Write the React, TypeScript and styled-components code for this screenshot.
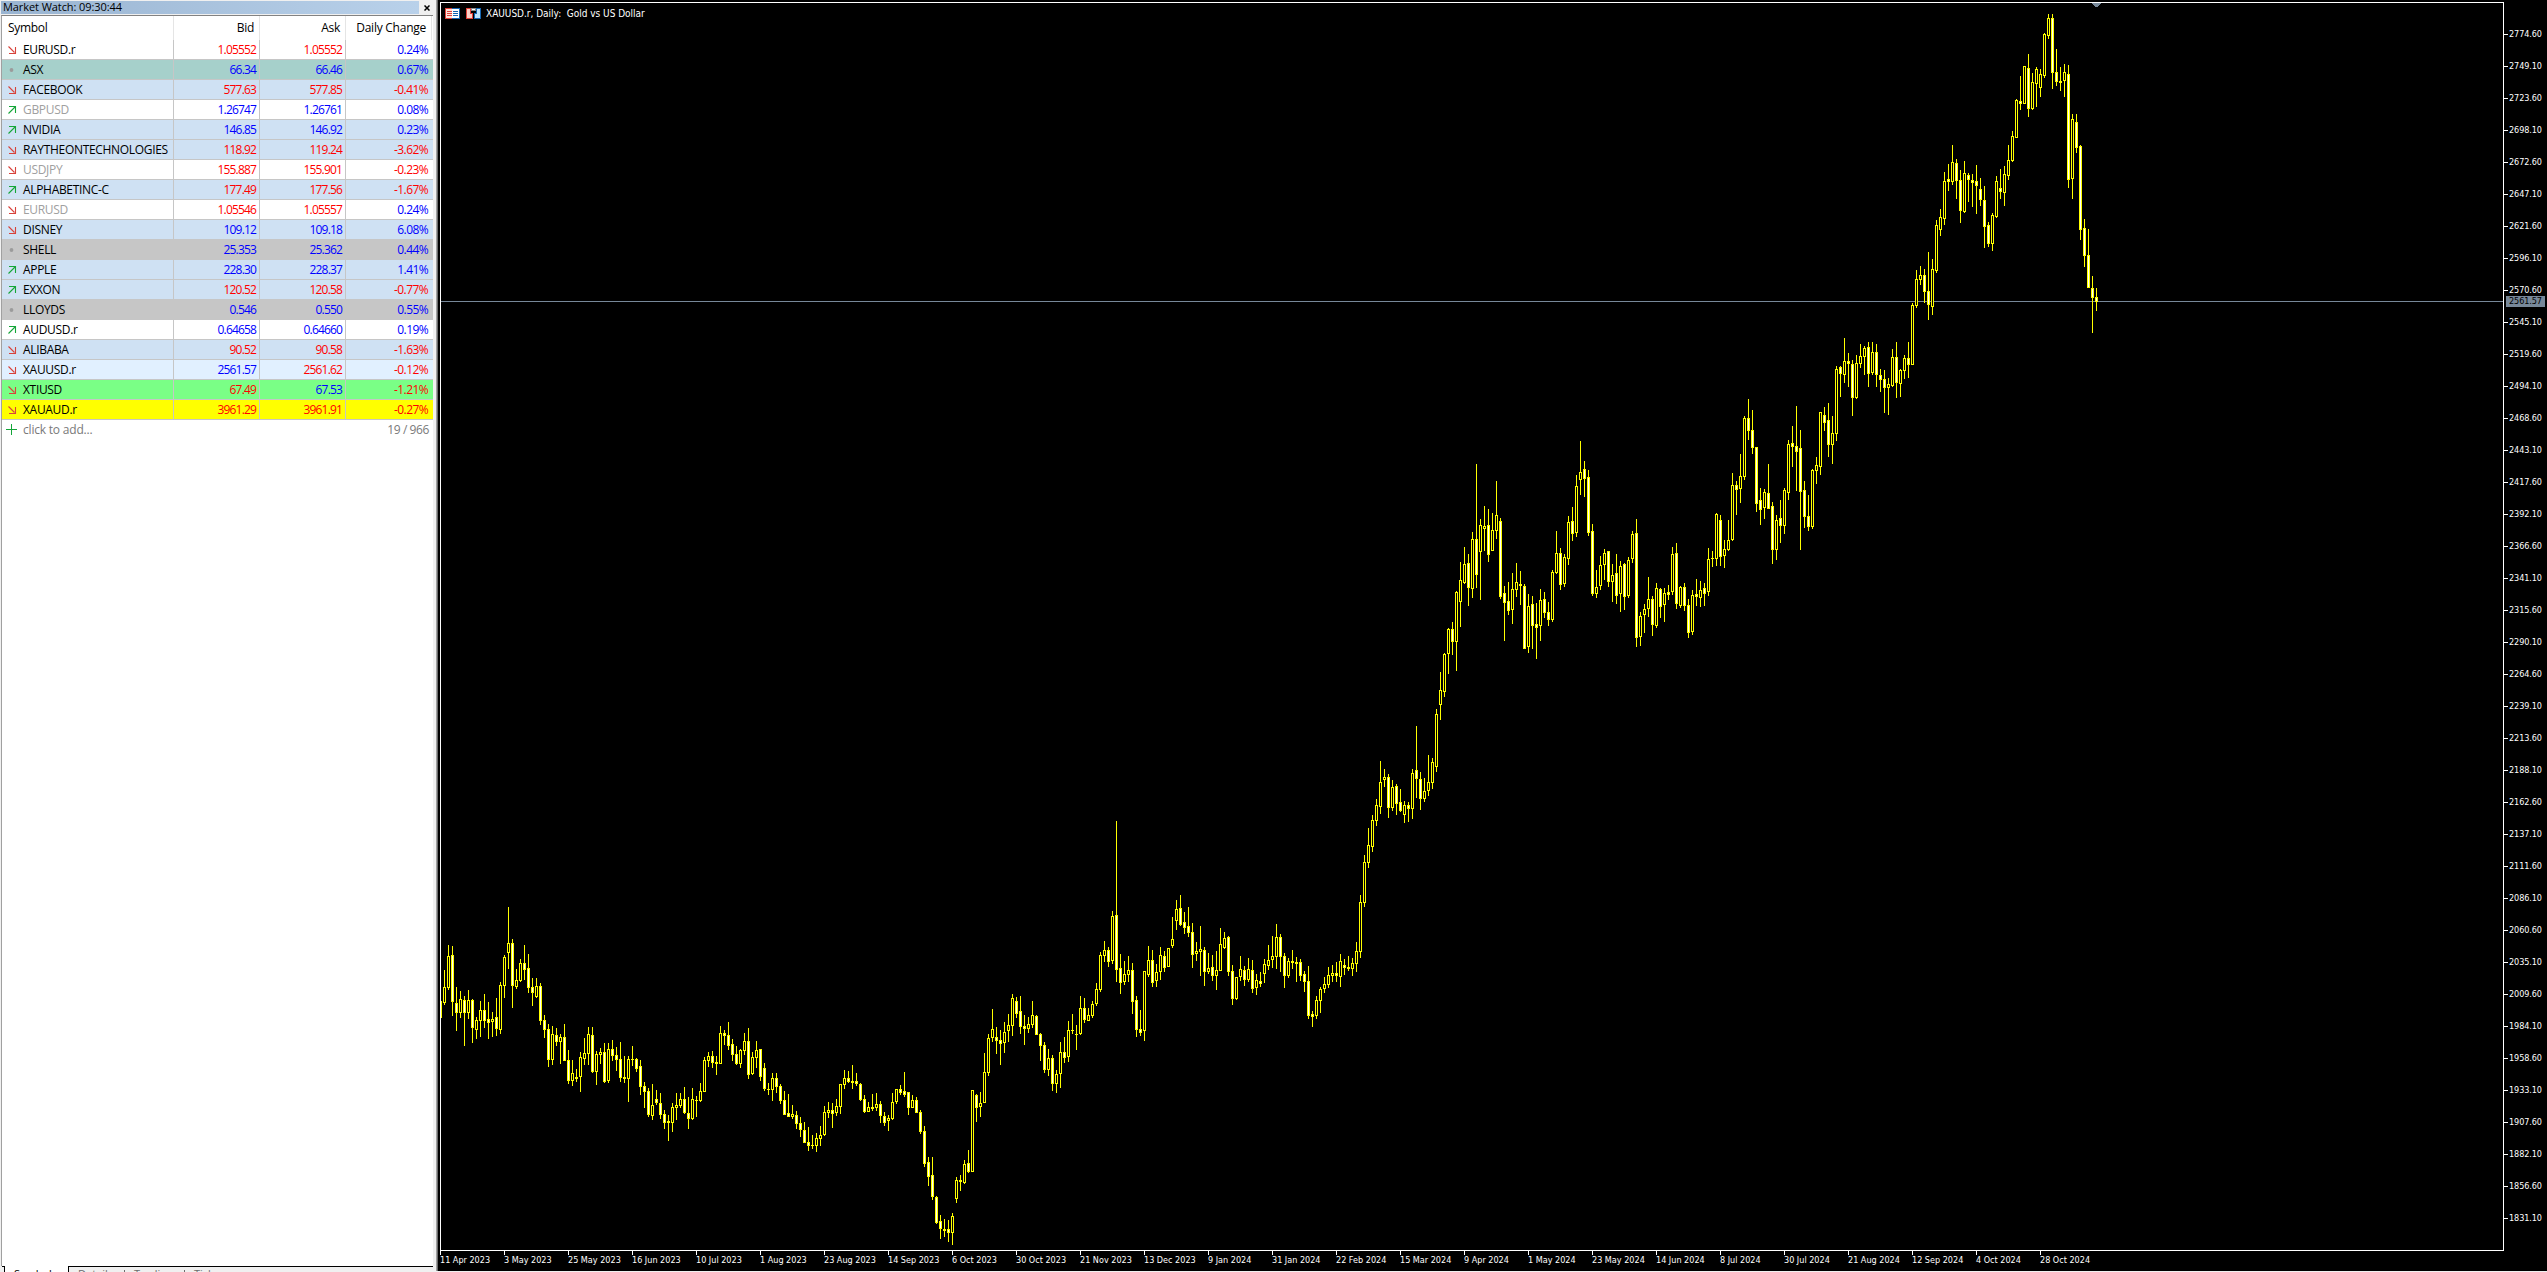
import React from "react";
import styled, { createGlobalStyle } from "styled-components";

const UI_FONT = `"Open Sans", "Noto Sans", sans-serif`;
const CHART_FONT = `"DejaVu Sans Condensed", "DejaVu Sans", sans-serif`;

const GlobalStyle = createGlobalStyle`
  * {
    box-sizing: border-box;
  }
  html, body {
    margin: 0;
    padding: 0;
    overflow: hidden;
  }
`;

const Layout = styled.div`
  display: flex;
  width: 2547px;
  height: 1272px;
  background: #f0f0f0;
  overflow: hidden;
`;

/* ---------- market watch ---------- */

const Panel = styled.div`
  display: flex;
  flex-direction: column;
  width: 436px;
  height: 1272px;
  padding-top: 1px;
  background: #f0f0f0;
  font-family: ${UI_FONT};
  color: #000;
`;

const PanelTop = styled.div`
  display: flex;
  align-items: center;
  height: 13px;
  margin: 0 0 1px 1px;
`;

const PanelTitle = styled.div`
  width: 418px;
  height: 13px;
  padding-left: 2px;
  background: linear-gradient(90deg, #99b4d1, #b9d1ea);
  font-size: 11px;
  line-height: 12px;
  letter-spacing: -0.08px;
  white-space: pre;
`;

const CloseButton = styled.div`
  display: flex;
  align-items: center;
  justify-content: center;
  width: 16px;
  height: 13px;
`;

const Table = styled.div`
  flex: 1;
  width: 432px;
  margin-left: 1px;
  border-left: 1px solid #a0a0a0;
  border-top: 1px solid #828282;
  background: #fff;
  font-size: 12px;
`;

const Row = styled.div<{ $bg?: string }>`
  display: grid;
  grid-template-columns: 172px 86px 86px 86px;
  height: 20px;
  background: ${props => props.$bg || "#fff"};
  border-bottom: 1px solid #c6c6c6;
`;

const HeaderRow = styled(Row)`
  height: 24px;
  border-bottom: none;
`;

const Cell = styled.div<{ $color?: string }>`
  display: flex;
  align-items: center;
  justify-content: flex-end;
  padding-right: 3px;
  border-right: 1px solid #c6c6c6;
  color: ${props => props.$color || "#000"};
  letter-spacing: -0.84px;
  line-height: 18px;
  white-space: nowrap;
  &:last-child {
    padding-right: 4px;
    border-right: none;
    letter-spacing: -0.6px;
  }
`;

const HeaderCell = styled(Cell)`
  padding: 0 5px 0 6px;
  border-right-color: #e5e5e5;
  letter-spacing: -0.3px;
  &:first-child {
    justify-content: flex-start;
  }
  &:last-child {
    padding-right: 5px;
    border-right: 1px solid #e5e5e5;
    letter-spacing: -0.25px;
  }
`;

const SymbolCell = styled(Cell)`
  justify-content: flex-start;
  gap: 6px;
  padding-left: 5px;
  letter-spacing: -0.32px;
`;

const AddRow = styled.div`
  display: flex;
  align-items: center;
  height: 19px;
  padding: 0 4px 0 4px;
  color: #7a7a7a;
  letter-spacing: -0.2px;
`;

const AddLabel = styled.span`
  flex: 1;
  padding-left: 6px;
`;

const Count = styled.span`
  letter-spacing: -0.4px;
`;

const Tabs = styled.div`
  display: flex;
  height: 6px;
  width: 431px;
  margin-left: 2px;
  overflow: hidden;
  font-size: 11px;
  line-height: 14px;
`;

const Tab = styled.div<{ $active?: boolean; $width: number }>`
  width: ${props => props.$width}px;
  height: 20px;
  padding-left: 9px;
  border-top: 1px solid ${props => (props.$active ? "#fff" : "#000")};
  background: ${props => (props.$active ? "#fff" : "#f0f0f0")};
  color: ${props => (props.$active ? "#000" : "#6d6d6d")};
`;

const TabDivider = styled.div`
  width: 1px;
  height: 20px;
  border-top: 1px solid #000;
  background: linear-gradient(#f0f0f0 3px, #6d6d6d 3px);
`;

const TabEdge = styled.div<{ $width: number; $side: "left" | "right" }>`
  width: ${props => props.$width}px;
  height: 20px;
  border-top: 1px solid #000;
  border-${props => props.$side}: 1px solid #000;
`;

const RED = "#ff0000";
const BLUE = "#0000ff";
const SKY = "#cfe1f3";

type Trend = "up" | "down" | "flat";

interface Quote {
  symbol: string;
  trend: Trend;
  bid: string;
  ask: string;
  change: string;
  // r = red, b = blue, for bid / ask / change
  colors: string;
  bg?: string;
  muted?: boolean;
}

const quotes: Quote[] = [
  { symbol: "EURUSD.r", trend: "down", bid: "1.05552", ask: "1.05552", change: "0.24%", colors: "rrb" },
  { symbol: "ASX", trend: "flat", bid: "66.34", ask: "66.46", change: "0.67%", colors: "bbb", bg: "#a6d0cb" },
  { symbol: "FACEBOOK", trend: "down", bid: "577.63", ask: "577.85", change: "-0.41%", colors: "rrr", bg: SKY },
  { symbol: "GBPUSD", trend: "up", bid: "1.26747", ask: "1.26761", change: "0.08%", colors: "bbb", muted: true },
  { symbol: "NVIDIA", trend: "up", bid: "146.85", ask: "146.92", change: "0.23%", colors: "bbb", bg: SKY },
  { symbol: "RAYTHEONTECHNOLOGIES", trend: "down", bid: "118.92", ask: "119.24", change: "-3.62%", colors: "rrr", bg: SKY },
  { symbol: "USDJPY", trend: "down", bid: "155.887", ask: "155.901", change: "-0.23%", colors: "rrr", muted: true },
  { symbol: "ALPHABETINC-C", trend: "up", bid: "177.49", ask: "177.56", change: "-1.67%", colors: "rrr", bg: SKY },
  { symbol: "EURUSD", trend: "down", bid: "1.05546", ask: "1.05557", change: "0.24%", colors: "rrb", muted: true },
  { symbol: "DISNEY", trend: "down", bid: "109.12", ask: "109.18", change: "6.08%", colors: "bbb", bg: SKY },
  { symbol: "SHELL", trend: "flat", bid: "25.353", ask: "25.362", change: "0.44%", colors: "bbb", bg: "#c6c6c6" },
  { symbol: "APPLE", trend: "up", bid: "228.30", ask: "228.37", change: "1.41%", colors: "bbb", bg: SKY },
  { symbol: "EXXON", trend: "up", bid: "120.52", ask: "120.58", change: "-0.77%", colors: "rrr", bg: SKY },
  { symbol: "LLOYDS", trend: "flat", bid: "0.546", ask: "0.550", change: "0.55%", colors: "bbb", bg: "#c6c6c6" },
  { symbol: "AUDUSD.r", trend: "up", bid: "0.64658", ask: "0.64660", change: "0.19%", colors: "bbb" },
  { symbol: "ALIBABA", trend: "down", bid: "90.52", ask: "90.58", change: "-1.63%", colors: "rrr", bg: SKY },
  { symbol: "XAUUSD.r", trend: "down", bid: "2561.57", ask: "2561.62", change: "-0.12%", colors: "brr", bg: "#e1f0ff" },
  { symbol: "XTIUSD", trend: "down", bid: "67.49", ask: "67.53", change: "-1.21%", colors: "rbr", bg: "#7aff86" },
  { symbol: "XAUAUD.r", trend: "down", bid: "3961.29", ask: "3961.91", change: "-0.27%", colors: "rrr", bg: "#ffff00" },
];

const toColor = (c: string) => (c === "r" ? RED : BLUE);

const TrendIcon: React.FC<{ trend: Trend }> = ({ trend }) => (
  <svg width="10" height="10" viewBox="0 0 10 10" fill="none">
    {trend === "flat" && <circle cx="4.5" cy="5" r="1.9" fill="#9b9b9b" />}
    {trend === "down" && <path d="M1.5 1.5L7.5 7.5M2 8.5H8.5V2" stroke="#d8433b" strokeWidth="1.1" />}
    {trend === "up" && <path d="M1.5 8.5L8 2M2 1.5H8.5V8" stroke="#14a538" strokeWidth="1.1" />}
  </svg>
);

const MarketWatch: React.FC = () => (
  <Panel>
    <PanelTop>
      <PanelTitle>Market Watch: 09:30:44</PanelTitle>
      <CloseButton>
        <svg width="6" height="6" viewBox="0 0 6 6">
          <path d="M0.5 0.5L5.5 5.5M5.5 0.5L0.5 5.5" stroke="#000" strokeWidth="1.5" />
        </svg>
      </CloseButton>
    </PanelTop>
    <Table>
      <HeaderRow>
        <HeaderCell>Symbol</HeaderCell>
        <HeaderCell>Bid</HeaderCell>
        <HeaderCell>Ask</HeaderCell>
        <HeaderCell>Daily Change</HeaderCell>
      </HeaderRow>
      {quotes.map(q => (
        <Row key={q.symbol} $bg={q.bg}>
          <SymbolCell $color={q.muted ? "#a0a0a0" : "#000"}>
            <TrendIcon trend={q.trend} />
            {q.symbol}
          </SymbolCell>
          <Cell $color={toColor(q.colors[0])}>{q.bid}</Cell>
          <Cell $color={toColor(q.colors[1])}>{q.ask}</Cell>
          <Cell $color={toColor(q.colors[2])}>{q.change}</Cell>
        </Row>
      ))}
      <AddRow>
        <svg width="11" height="11" viewBox="0 0 11 11">
          <path d="M5.5 0V11M0 5.5H11" stroke="#14a538" />
        </svg>
        <AddLabel>click to add...</AddLabel>
        <Count>19 / 966</Count>
      </AddRow>
    </Table>
    <Tabs>
      <TabEdge $width={3} $side="right" />
      <Tab $active $width={63}>Symbols</Tab>
      <TabEdge $width={1} $side="left" />
      <Tab $width={55}>Details</Tab>
      <TabDivider />
      <Tab $width={59}>Trading</Tab>
      <TabDivider />
      <Tab $width={248}>Ticks</Tab>
    </Tabs>
  </Panel>
);

/* ---------- chart ---------- */

const ChartWindow = styled.div`
  display: flex;
  flex-direction: column;
  flex: 1;
  height: 1271px;
  padding: 2px 0 0 2px;
  background: #000;
  border-left: 1px solid #a0a0a0;
  box-shadow: inset 1px 0 0 #696969;
  font-family: ${CHART_FONT};
  font-size: 9px;
  color: #fff;
`;

const ChartBody = styled.div`
  display: flex;
  height: 1249px;
  margin-left: 1px;
`;

const Plot = styled.div`
  position: relative;
  width: 2064px;
  height: 1249px;
  border: 1px solid #fff;
`;

const PlotSvg = styled.svg`
  position: absolute;
  left: -1px;
  top: -1px;
`;

const ChartCaption = styled.div`
  position: relative;
  display: flex;
  align-items: center;
  gap: 6px;
  padding: 5px 0 0 4px;
  height: 16px;
  line-height: 12px;
  white-space: pre;
`;

const CaptionText = styled.span`
  margin-left: -1px;
  font-size: 10px;
  letter-spacing: -0.02px;
`;

const PriceScale = styled.div`
  position: relative;
  flex: 1;
  padding-top: 16px;
`;

const PriceLabel = styled.div`
  display: flex;
  align-items: center;
  height: 32px;
  line-height: 32px;
  letter-spacing: -0.08px;
  &::before {
    content: "";
    width: 4px;
    height: 1px;
    margin-right: 1px;
    background: #fff;
  }
`;

const LastPrice = styled.div`
  position: absolute;
  left: 2px;
  top: 294px;
  width: 39px;
  height: 11px;
  padding-left: 3px;
  background: #778899;
  color: #000;
  line-height: 11px;
  letter-spacing: -0.08px;
`;

const TimeScale = styled.div`
  display: flex;
  margin-left: 1px;
`;

const TimeLabel = styled.div`
  width: 64px;
  white-space: nowrap;
  line-height: 11px;
  &::before {
    content: "";
    display: block;
    width: 1px;
    height: 4px;
    background: #fff;
  }
`;

const times = [
  "11 Apr 2023", "3 May 2023", "25 May 2023", "16 Jun 2023", "10 Jul 2023", "1 Aug 2023", "23 Aug 2023",
  "14 Sep 2023", "6 Oct 2023", "30 Oct 2023", "21 Nov 2023", "13 Dec 2023", "9 Jan 2024", "31 Jan 2024",
  "22 Feb 2024", "15 Mar 2024", "9 Apr 2024", "1 May 2024", "23 May 2024", "14 Jun 2024", "8 Jul 2024",
  "30 Jul 2024", "21 Aug 2024", "12 Sep 2024", "4 Oct 2024", "28 Oct 2024",
];

const prices = Array.from({ length: 38 }, (_, i) => (2774.6 - i * 25.5).toFixed(2));

// Each bar: u/d (up or down), then high, body top, body bottom, low,
// as rows below the offset of its series.
const series: { offset: number; bars: string }[] = [
  {
    offset: 880,
    bars: `
u121,121,138,138 u90,107,123,125 u65,76,108,110 d66,75,122,136 d107,123,133,151 u111,119,133,138 d116,120,133,166
u110,120,133,139 d119,120,148,163 u137,140,150,159 u121,130,141,157 d114,130,141,148 d122,139,143,159 u132,139,142,157
d118,137,149,156 u102,105,150,154 u75,77,106,118 u27,63,73,89 d59,63,106,128 u89,100,107,109 u79,83,101,102
d65,83,90,100 d74,88,108,113 d98,107,113,126 u98,106,117,118 d103,106,141,145 d135,140,150,158 d144,149,180,187
u146,154,180,185 d148,155,162,166 u154,157,162,184 d144,157,181,181 d170,180,201,204 u180,193,201,206 d189,197,199,202
u172,177,197,212 u158,173,179,185 u147,154,174,185 d147,155,192,193 u171,174,192,205 u168,172,175,184 d163,172,202,203
u163,169,201,203 d160,169,176,181 d167,175,180,191 d162,179,198,202 d176,197,199,203 u176,179,199,222 d166,179,180,186
d178,179,189,192 d180,186,207,215 d202,206,212,228 d208,211,235,237 u204,225,236,240 d210,219,223,225 d213,223,235,239
d230,234,243,249 d235,241,243,261 u223,227,243,252 u213,225,228,240 u213,219,226,228 d207,219,233,234 d217,233,239,249
u208,219,239,240 d216,220,221,237 u203,211,221,222 u177,180,212,212 u172,176,181,187 d171,176,183,188 d176,182,184,195
u146,153,184,184 d150,153,156,165 d142,155,166,170 d159,164,175,181 d166,174,184,185 u169,170,184,188 u153,161,171,175
d148,161,195,199 u172,177,194,195 u161,170,178,188 d169,169,197,201 d183,188,209,211 d203,209,210,215 u193,198,210,221
d193,198,207,213`,
  },
  {
    offset: 980,
    bars: `
d104,106,121,124 d111,120,135,135 d114,133,137,137 u125,134,137,139 d131,135,144,149 d137,143,150,157 d142,150,163,163
d147,162,166,171 d155,165,166,169 u153,158,166,172 u146,155,159,166 u126,132,155,156 u122,130,133,138 d123,130,134,148
u119,126,133,136 u104,104,127,134 u90,98,105,109 d91,98,102,103 d85,101,103,109 d93,101,104,106 d103,104,120,121
d115,119,132,133 u122,127,132,132 d114,127,129,131 u113,124,128,131 d121,124,136,143 d132,136,143,146 u135,138,141,151
u113,122,139,140 u109,109,122,124 d105,109,113,115 d92,111,115,117 d112,112,128,135 u115,120,128,128 d117,120,133,133
d130,132,152,154 d146,151,184,187 d177,182,197,206 d177,195,217,220 d216,217,243,244 d235,241,249,259 d239,249,251,257
d240,249,253,262 u233,236,253,265 u197,200,219,223 d195,200,202,211 u180,184,203,204 d170,183,192,193 u110,110,192,192
d114,115,128,142 u112,123,127,137 u73,92,123,123 u54,58,93,96 u29,49,58,62 d47,57,61,74 d50,60,64,85 u42,52,63,73
u34,45,51,62 u14,18,46,56 d17,21,34,38 d16,31,47,54 d35,46,49,65 u37,44,49,53 u21,35,45,48 d35,36,55,55
d53,54,66,81 d62,65,90,93 u69,78,90,96 d75,78,104,111 u90,94,104,113 u62,72,94,108 d57,72,78,83 u41,50,77,82
d34,50,51,54 d45,54,55,70 u16,28,54,55 d18,28,40,43 u28,35,41,41 u21,24,36,38`,
  },
  {
    offset: 800,
    bars: `
u183,189,204,206 u152,155,190,192 u141,150,156,162 d147,150,162,167 u111,116,161,164 d21,115,170,182 d154,168,183,194
u161,174,182,185 u156,170,175,182 d163,170,202,214 d196,200,230,237 d210,229,233,236 u171,171,231,241 u146,160,175,177
d150,160,183,187 u164,172,181,187 u147,155,172,180 d151,156,168,172 u148,148,167,167 u117,139,146,148 u100,109,121,130
d95,108,125,126 d112,122,128,134 d107,126,133,137 d123,132,155,168 u142,151,154,161 u126,149,152,176 d147,150,172,186
u153,168,172,174 d155,167,176,181 u151,170,176,190 u128,144,171,171 u132,138,148,149 d136,137,172,176 d165,171,199,205
u177,177,199,200 u156,169,177,181 d166,170,180,186 u158,169,180,182 d160,170,189,193 u174,180,188,195 d172,181,184,187
u159,164,174,183 u145,160,166,170 u136,156,160,168 u124,137,157,169 d134,137,157,172 d153,156,176,188 u158,161,176,178
d150,161,163,169 d157,162,164,182 d159,162,176,181 d171,174,182,192 d166,181,216,219 d211,214,217,227 u196,200,216,219
u187,189,201,213 u177,184,189,193 u167,175,185,188 u165,173,176,182 d162,173,176,182 u154,161,177,187 d159,165,168,175
d156,167,169,171 u158,163,169,176 u142,151,164,172 u95,102,152,158 u55,62,103,107 u28,45,63,68 u15,20,47,52
u-1,5,21,26`,
  },
  {
    offset: 450,
    bars: `
u311,332,357,364 u319,327,330,337 d324,327,358,368 u330,337,358,361 d334,336,354,365 d339,352,361,362 u351,355,365,373
d352,355,359,372 u319,323,359,369 d276,320,329,348 d322,329,349,360 u328,341,349,352 u305,332,341,346 u308,312,333,339
u259,264,317,322 u222,240,255,270 u203,204,242,247 u178,179,204,224 d172,179,192,205 u141,142,192,221 u112,130,152,177
u97,114,133,134 d104,113,138,156 u82,89,139,148 d14,89,125,138 u69,75,102,150 u56,76,79,101 d59,75,105,112
u63,80,101,101 u31,65,81,89 d68,71,147,149 d136,143,153,191 d132,151,161,165 u123,139,160,174 u113,132,140,147
d121,134,136,155 d134,136,199,199 u144,156,197,203 d146,154,176,199 d153,174,178,209 u139,150,176,191 d142,149,163,168
d152,162,170,176 u120,122,170,172 u81,103,123,124 d98,103,135,140 u104,107,134,137 u66,72,109,115 d57,71,84,91
u25,36,83,87 u-9,22,30,45 d11,19,29,47 d20,27,83,86 d74,81,144,146 u120,137,144,148 u106,115,136,140 u99,103,115,130
d101,101,132,137 u114,125,132,152 d104,123,146,154 u111,116,144,162 d113,114,147,160 u107,110,146,148 u81,84,109,113
d69,83,188,197 u162,166,187,196`,
  },
  {
    offset: 330,
    bars: `
u274,279,285,303 u247,269,279,287 d266,269,295,306 u253,258,296,298 d258,259,277,288 u258,263,275,292 d255,262,265,270
u217,224,262,265 d213,223,274,279 u256,257,276,278 d253,257,276,281 d269,275,303,308 u260,265,302,305 d249,264,267,276
u251,260,268,277 d253,258,264,276 u218,229,262,266 d221,228,229,237 u183,184,229,236 d185,190,227,236 u210,219,226,238
u190,210,220,221 u143,155,210,211 d151,155,160,185 u124,146,159,173 u86,88,147,150 d69,88,101,110 d80,100,118,124
d117,117,174,182 d158,170,180,195 u159,162,178,189 d134,163,179,179 d172,176,220,234 u185,190,220,230 d170,188,196,213
u158,160,196,204 u110,114,163,170 d96,113,117,137 d76,116,122,161 d100,118,162,220 d151,160,187,198 d165,186,197,201
u139,140,197,199 u127,135,141,154 u82,82,137,145 d77,85,93,101 d73,90,115,127 u86,103,115,134 u36,39,104,111
d36,37,44,67 u8,31,45,53 d23,31,34,57 d30,34,68,86 u25,33,68,69 u14,26,34,38 u16,18,27,45 d12,17,44,57
u12,22,43,45 d14,22,45,57 d39,45,50,62 d40,49,58,83 u48,54,58,85 u19,27,56,57 d12,27,53,68 u39,40,54,67
u25,28,41,49 d12,28,35,48`,
  },
  {
    offset: 0,
    bars: `
u303,305,365,365 u270,279,306,308 u266,275,280,285 d269,275,292,303 d252,291,305,320 u259,269,307,315 u220,225,271,273
u209,217,230,236 u172,181,219,225 d164,179,182,191 u145,162,182,185 d159,163,181,199 d170,180,211,223 u161,173,212,213
d173,175,180,202 d174,180,183,207 d165,181,186,214 d178,189,200,206 d186,200,227,248 d222,225,244,247 u213,215,244,251
u176,181,217,218 d169,188,192,199 u166,174,193,206 u145,160,176,180 u131,136,161,162 u99,100,138,138 d76,101,104,110
u66,66,104,104 d54,68,109,117 u73,82,109,110 u67,69,84,107 u69,74,88,97 u33,34,76,78 u14,18,36,39 d14,18,73,89
d49,72,82,86 d67,81,83,91 u64,72,81,97 d65,74,180,188 u114,119,179,199 d114,122,148,153 d145,146,230,240
d219,228,256,267 d229,255,288,288 d276,288,298,333 d288,297,302,311`,
  },
];

interface Bar {
  up: boolean;
  high: number;
  top: number;
  bottom: number;
  low: number;
}

const bars: Bar[] = series.flatMap(({ offset, bars: text }) =>
  text.trim().split(/\s+/).map(item => {
    const [high, top, bottom, low] = item.slice(1).split(",").map(n => Number(n) + offset);
    return { up: item[0] === "u", high, top, bottom, low };
  })
);

const BAR_STEP = 4;
const BAR_COLOR = "#ffff00";

const Candle: React.FC<{ bar: Bar; x: number }> = ({ bar, x }) => {
  const height = bar.bottom - bar.top;
  return (
    <g>
      <rect x={x} y={bar.high} width={1} height={bar.low - bar.high} fill={BAR_COLOR} />
      <rect x={x - 1} y={bar.top} width={3} height={height} fill={BAR_COLOR} />
      {height > 2 && (
        <rect x={x} y={bar.top + 1} width={1} height={height - 2} fill={bar.up ? "#000" : "#fff"} />
      )}
    </g>
  );
};

const DepthIcon = () => (
  <svg width="15" height="11" viewBox="0 0 15 11" shapeRendering="crispEdges">
    <rect x="0" y="0" width="8" height="11" fill="#e0413a" />
    <rect x="1" y="1" width="6" height="9" fill="#fde3da" />
    <path d="M2 3.5H7M2 5.5H7M2 7.5H7" stroke="#e0413a" />
    <rect x="7" y="0" width="8" height="11" fill="#1565b0" />
    <rect x="7" y="1" width="7" height="9" fill="#fff" />
    <path d="M8 3.5H13M8 5.5H13M8 7.5H13" stroke="#1565b0" />
  </svg>
);

const TradeIcon = () => (
  <svg width="15" height="11" viewBox="0 0 15 11" shapeRendering="crispEdges">
    <path d="M0 0H5V5H7V11H0Z" fill="#e0413a" />
    <path d="M1 1H4V6H6V10H1Z" fill="#fbd0c6" />
    <path d="M10 0H15V11H8V5H10Z" fill="#1565b0" />
    <path d="M11 1H14V10H9V6H11Z" fill="#bfe3fb" />
    <rect x="5" y="0" width="5" height="3" fill="#8a8a8a" />
    <rect x="6" y="1" width="3" height="1" fill="#fff" />
  </svg>
);

const Chart: React.FC = () => (
  <ChartWindow>
    <ChartBody>
      <Plot>
        <PlotSvg width="2063" height="1248" viewBox="440 2 2063 1248" shapeRendering="crispEdges">
          <rect x="441" y="301" width="2062" height="1" fill="#778899" />
          {bars.map((bar, i) => (
            <Candle key={i} bar={bar} x={440 + i * BAR_STEP} />
          ))}
          <rect x="440" y="2" width="1" height="1248" fill="#fff" />
          <path d="M2092 3h9v1h-1v1h-1v1h-1v1h-3v-1h-1v-1h-1v-1h-1z" fill="#778899" />
        </PlotSvg>
        <ChartCaption>
          <DepthIcon />
          <TradeIcon />
          <CaptionText>XAUUSD.r, Daily:  Gold vs US Dollar</CaptionText>
        </ChartCaption>
      </Plot>
      <PriceScale>
        {prices.map(price => (
          <PriceLabel key={price}>{price}</PriceLabel>
        ))}
        <LastPrice>2561.57</LastPrice>
      </PriceScale>
    </ChartBody>
    <TimeScale>
      {times.map(time => (
        <TimeLabel key={time}>{time}</TimeLabel>
      ))}
    </TimeScale>
  </ChartWindow>
);

export default function App() {
  return (
    <Layout>
      <GlobalStyle />
      <MarketWatch />
      <Chart />
    </Layout>
  );
}
